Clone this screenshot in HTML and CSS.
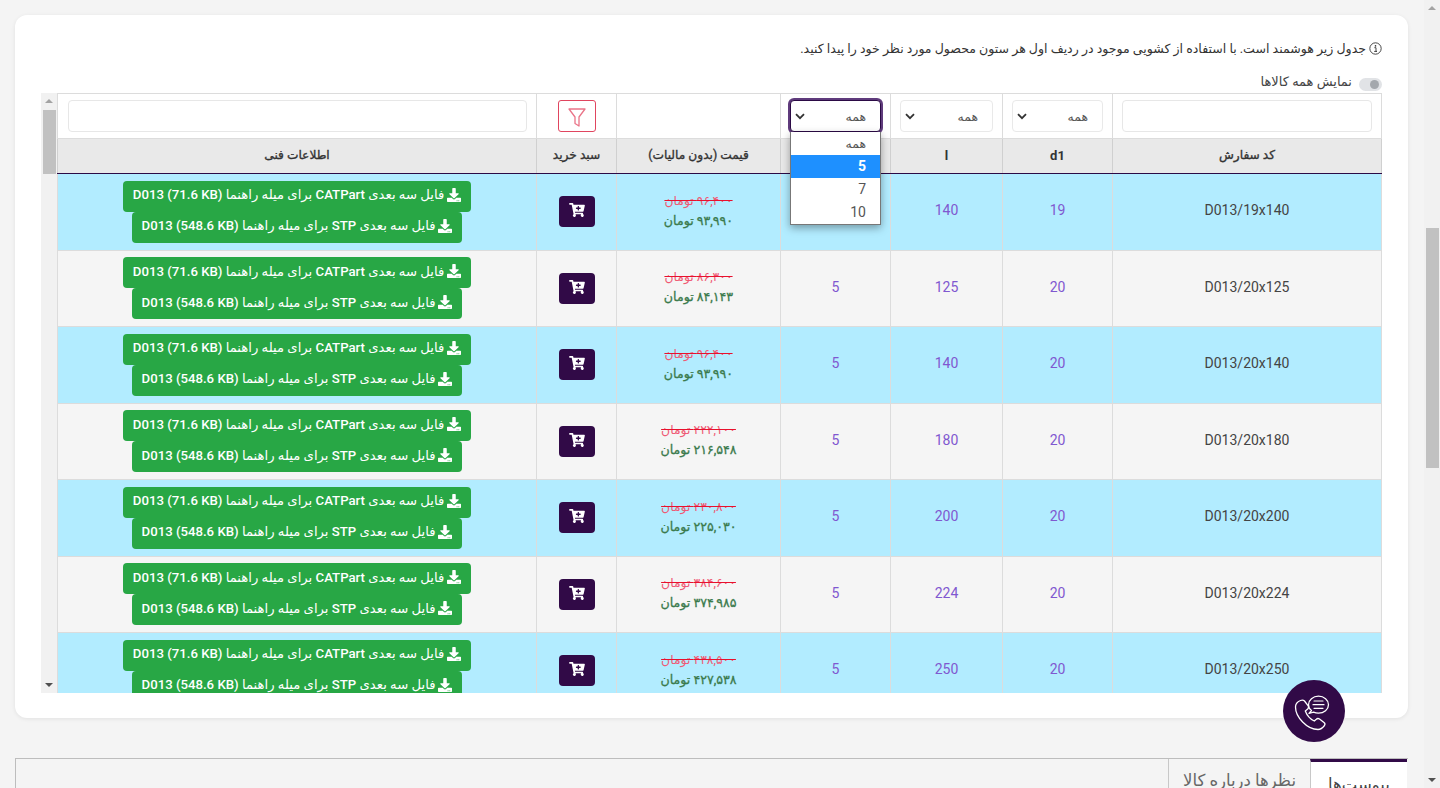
FILE: index.html
```html
<!DOCTYPE html>
<html lang="fa" dir="rtl">
<head>
  <meta charset="UTF-8" />
  <title>میله راهنما D013</title>
  <link rel="stylesheet" href="styles.css">
</head>
<body>
  <svg class="sprite" xmlns="http://www.w3.org/2000/svg">
    <symbol id="i-download" viewBox="0 0 512 512">
      <path fill="currentColor" d="M216 0h80c13.3 0 24 10.7 24 24v168h87.7c17.8 0 26.7 21.5 14.1 34.1L269.7 378.3c-7.5 7.5-19.8 7.5-27.3 0L90.1 226.1c-12.6-12.6-3.7-34.1 14.1-34.1H192V24c0-13.3 10.7-24 24-24zm296 376v112c0 13.3-10.7 24-24 24H24c-13.3 0-24-10.7-24-24V376c0-13.3 10.7-24 24-24h146.7l49 49c20.1 20.1 52.5 20.1 72.6 0l49-49H488c13.3 0 24 10.7 24 24zm-124 88c0-11-9-20-20-20s-20 9-20 20 9 20 20 20 20-9 20-20zm64 0c0-11-9-20-20-20s-20 9-20 20 9 20 20 20 20-9 20-20z"/>
    </symbol>
    <symbol id="i-cart" viewBox="0 0 576 512">
      <path fill="currentColor" d="M504.717 320H211.572l6.545 32h268.418c15.401 0 26.816 14.301 23.403 29.319l-5.517 24.276C523.112 414.668 536 433.828 536 456c0 31.202-25.519 56.444-56.824 55.994-29.823-.429-54.35-24.631-55.155-54.447-.44-16.287 6.085-31.049 16.803-41.548H231.176C241.553 426.165 248 440.326 248 456c0 31.813-26.528 57.431-58.67 55.938-28.54-1.325-51.751-24.385-53.251-52.917-1.158-22.034 10.436-41.455 28.051-51.586L93.883 64H24C10.745 64 0 53.255 0 40V24C0 10.745 10.745 0 24 0h102.529c11.401 0 21.228 8.021 23.513 19.19L159.208 64H551.99c15.401 0 26.816 14.301 23.403 29.319l-47.273 208C525.637 312.246 515.923 320 504.717 320zM408 168h-48v-40c0-8.837-7.163-16-16-16h-16c-8.837 0-16 7.163-16 16v40h-48c-8.837 0-16 7.163-16 16v16c0 8.837 7.163 16 16 16h48v40c0 8.837 7.163 16 16 16h16c8.837 0 16-7.163 16-16v-40h48c8.837 0 16-7.163 16-16v-16c0-8.837-7.163-16-16-16z"/>
    </symbol>
    <symbol id="i-chevron" viewBox="0 0 10 7">
      <path d="M1 1.2l4 4 4-4" fill="none" stroke="currentColor" stroke-width="1.8"/>
    </symbol>
  </svg>

  <div class="page-scrollbar">
    <span class="arrow-up"></span>
    <span class="page-thumb"></span>
    <span class="arrow-down"></span>
  </div>

  <main class="page">
    <section class="card">
      <p class="note">
        <svg class="note-icon" viewBox="0 0 16 16"><circle cx="8" cy="8" r="7" fill="none" stroke="currentColor" stroke-width="1.1"/><circle cx="8" cy="4.8" r="1" fill="currentColor"/><path d="M6.6 7h2v4.6h1M6.4 11.6h3.2" fill="none" stroke="currentColor" stroke-width="1.1"/></svg>
        جدول زیر هوشمند است. با استفاده از کشویی موجود در ردیف اول هر ستون محصول مورد نظر خود را پیدا کنید.
      </p>

      <div class="show-all">
        <span class="toggle"><span class="knob"></span></span>
        <span>نمایش همه کالاها</span>
      </div>

      <div class="table-wrap">
        <table class="products">
          <colgroup>
            <col class="c-code"><col class="c-d1"><col class="c-l"><col class="c-d"><col class="c-price"><col class="c-cart"><col>
          </colgroup>
          <thead>
            <tr class="filters">
              <td><div class="text-input"></div></td>
              <td><div class="select"><span>همه</span><svg class="chev"><use href="#i-chevron"/></svg></div></td>
              <td><div class="select"><span>همه</span><svg class="chev"><use href="#i-chevron"/></svg></div></td>
              <td class="open-cell">
                <div class="select focused"><span>همه</span><svg class="chev"><use href="#i-chevron"/></svg></div>
                <ul class="options">
                  <li class="fa-opt">همه</li>
                  <li class="selected">5</li>
                  <li>7</li>
                  <li>10</li>
                </ul>
              </td>
              <td></td>
              <td><button class="filter-btn"><svg viewBox="0 0 18 19"><path d="M1 1h16l-6 8v9l-4-2.500V9z" fill="none" stroke="currentColor" stroke-width="1.300" stroke-linejoin="round"/></svg></button></td>
              <td class="wide-filter"><div class="text-input"></div></td>
            </tr>
            <tr class="heads">
              <th>کد سفارش</th>
              <th class="latin">d1</th>
              <th class="latin">l</th>
              <th class="latin">d</th>
              <th>قیمت (بدون مالیات)</th>
              <th>سبد خرید</th>
              <th>اطلاعات فنی</th>
            </tr>
          </thead>
          <tbody>
            <tr>
              <td class="code">D013/19x140</td><td class="num">19</td><td class="num">140</td><td class="num">5</td>
              <td class="price"><s>۹۶,۴۰۰ تومان</s><b>۹۳,۹۹۰ تومان</b></td>
              <td><a class="cart"><svg><use href="#i-cart"/></svg></a></td>
              <td><div class="files"><a class="file"><svg><use href="#i-download"/></svg>فایل سه بعدی CATPart برای میله راهنما D013 (71.6 KB)</a><a class="file"><svg><use href="#i-download"/></svg>فایل سه بعدی STP برای میله راهنما D013 (548.6 KB)</a></div></td>
            </tr>
            <tr>
              <td class="code">D013/20x125</td><td class="num">20</td><td class="num">125</td><td class="num">5</td>
              <td class="price"><s>۸۶,۳۰۰ تومان</s><b>۸۴,۱۴۳ تومان</b></td>
              <td><a class="cart"><svg><use href="#i-cart"/></svg></a></td>
              <td><div class="files"><a class="file"><svg><use href="#i-download"/></svg>فایل سه بعدی CATPart برای میله راهنما D013 (71.6 KB)</a><a class="file"><svg><use href="#i-download"/></svg>فایل سه بعدی STP برای میله راهنما D013 (548.6 KB)</a></div></td>
            </tr>
            <tr>
              <td class="code">D013/20x140</td><td class="num">20</td><td class="num">140</td><td class="num">5</td>
              <td class="price"><s>۹۶,۴۰۰ تومان</s><b>۹۳,۹۹۰ تومان</b></td>
              <td><a class="cart"><svg><use href="#i-cart"/></svg></a></td>
              <td><div class="files"><a class="file"><svg><use href="#i-download"/></svg>فایل سه بعدی CATPart برای میله راهنما D013 (71.6 KB)</a><a class="file"><svg><use href="#i-download"/></svg>فایل سه بعدی STP برای میله راهنما D013 (548.6 KB)</a></div></td>
            </tr>
            <tr>
              <td class="code">D013/20x180</td><td class="num">20</td><td class="num">180</td><td class="num">5</td>
              <td class="price"><s>۲۲۲,۱۰۰ تومان</s><b>۲۱۶,۵۴۸ تومان</b></td>
              <td><a class="cart"><svg><use href="#i-cart"/></svg></a></td>
              <td><div class="files"><a class="file"><svg><use href="#i-download"/></svg>فایل سه بعدی CATPart برای میله راهنما D013 (71.6 KB)</a><a class="file"><svg><use href="#i-download"/></svg>فایل سه بعدی STP برای میله راهنما D013 (548.6 KB)</a></div></td>
            </tr>
            <tr>
              <td class="code">D013/20x200</td><td class="num">20</td><td class="num">200</td><td class="num">5</td>
              <td class="price"><s>۲۳۰,۸۰۰ تومان</s><b>۲۲۵,۰۳۰ تومان</b></td>
              <td><a class="cart"><svg><use href="#i-cart"/></svg></a></td>
              <td><div class="files"><a class="file"><svg><use href="#i-download"/></svg>فایل سه بعدی CATPart برای میله راهنما D013 (71.6 KB)</a><a class="file"><svg><use href="#i-download"/></svg>فایل سه بعدی STP برای میله راهنما D013 (548.6 KB)</a></div></td>
            </tr>
            <tr>
              <td class="code">D013/20x224</td><td class="num">20</td><td class="num">224</td><td class="num">5</td>
              <td class="price"><s>۳۸۴,۶۰۰ تومان</s><b>۳۷۴,۹۸۵ تومان</b></td>
              <td><a class="cart"><svg><use href="#i-cart"/></svg></a></td>
              <td><div class="files"><a class="file"><svg><use href="#i-download"/></svg>فایل سه بعدی CATPart برای میله راهنما D013 (71.6 KB)</a><a class="file"><svg><use href="#i-download"/></svg>فایل سه بعدی STP برای میله راهنما D013 (548.6 KB)</a></div></td>
            </tr>
            <tr>
              <td class="code">D013/20x250</td><td class="num">20</td><td class="num">250</td><td class="num">5</td>
              <td class="price"><s>۴۳۸,۵۰۰ تومان</s><b>۴۲۷,۵۳۸ تومان</b></td>
              <td><a class="cart"><svg><use href="#i-cart"/></svg></a></td>
              <td><div class="files"><a class="file"><svg><use href="#i-download"/></svg>فایل سه بعدی CATPart برای میله راهنما D013 (71.6 KB)</a><a class="file"><svg><use href="#i-download"/></svg>فایل سه بعدی STP برای میله راهنما D013 (548.6 KB)</a></div></td>
            </tr>
          </tbody>
        </table>
        <div class="table-scrollbar">
          <span class="arrow-up"></span>
          <span class="table-thumb"></span>
          <span class="arrow-down"></span>
        </div>
      </div>
    </section>

    <a class="call-btn">
      <svg viewBox="0 0 62 62" fill="none" stroke="#fff" stroke-width="1.300" stroke-linecap="round" stroke-linejoin="round">
        <path d="M17.500 20.500C15 21.500 12.500 24 12.500 27C12.500 37 24 49.500 35 49.500C38 49.500 40 47.500 41.500 45.500C42.300 44.300 42 43.300 41 42.500L36.500 39C35.300 38.200 34.300 38.300 33.300 39.300L31.300 41C27 39 24 35.500 22.300 31L24.700 29C25.700 28 25.800 27 25.200 25.800L21.500 21C20.500 20 19 19.900 17.500 20.500Z"/>
        <path d="M28.500 30.500C26.500 29 25.500 27 25.500 24.700C25.500 20 30 16.200 35.500 16.200S45.500 20 45.500 24.700S41 33.200 35.500 33.200C33.700 33.200 32 32.800 30.500 32.100L26 33.500Z"/>
        <path d="M31 21H40M30 24.700H41M31 28.300H40" stroke-width="1.200"/>
      </svg>
    </a>

    <section class="tabs">
      <a class="tab active">پیوست‌ها</a>
      <a class="tab">نظرها درباره کالا</a>
    </section>
  </main>
</body>
</html>
```

FILE: styles.css
```css
* {
  box-sizing: border-box;
}

html,
body {
  height: 100%;
}

body {
  margin: 0;
  display: flex;
  height: 100vh;
  overflow: hidden;
  background-color: #f4f4f4;
  color: #333;
  font-family: Roboto, "DejaVu Sans", sans-serif;
  font-size: 13px;
}

.sprite {
  display: none;
}

/* scrollbars */
.page-scrollbar,
.table-scrollbar {
  flex: 0 0 auto;
  width: 16px;
  display: flex;
  flex-direction: column;
  align-items: center;
  background-color: #f1f1f1;
}

.arrow-up,
.arrow-down {
  flex: 0 0 auto;
  width: 0;
  height: 0;
  border-left: 4px solid transparent;
  border-right: 4px solid transparent;
}

.arrow-up {
  margin-top: 6px;
  border-bottom: 4px solid #a3a3a3;
}

.arrow-down {
  margin-top: auto;
  margin-bottom: 6px;
  border-top: 4px solid #505050;
}

.page-thumb {
  width: 13px;
  height: 240px;
  margin-top: 218px;
  background-color: #c1c1c1;
}

.table-thumb {
  width: 13px;
  height: 64px;
  margin-top: 7px;
  background-color: #c1c1c1;
}

/* page */
.page {
  position: relative;
  flex: 1;
  min-width: 0;
  padding: 15px 16px 0 15px;
}

.card {
  height: 703px;
  padding: 23px 26px 0 26px;
  background-color: #fff;
  border-radius: 12px;
  box-shadow: 0 1px 4px rgba(0, 0, 0, 0.08);
}

.note {
  display: flex;
  align-items: center;
  gap: 3px;
  height: 20px;
  margin: 0;
  color: #333;
  font-size: 12.55px;
}

.note-icon {
  width: 13px;
  height: 13px;
  color: #333;
}

.show-all {
  display: flex;
  align-items: center;
  gap: 7px;
  height: 19px;
  margin-top: 16px;
  padding-bottom: 4px;
  color: #444;
  font-size: 13px;
}

.toggle {
  width: 23px;
  height: 13px;
  margin-top: 6px;
  padding: 2px 3px;
  display: flex;
  border-radius: 7px;
  background-color: #e1e3e6;
}

.knob {
  width: 9px;
  height: 9px;
  border-radius: 50%;
  background-color: #a4a8ad;
}

/* table */
.table-wrap {
  display: flex;
  height: 600px;
  overflow: hidden;
}

.products {
  flex: 1;
  width: 1324px;
  height: 0;
  table-layout: fixed;
  border-collapse: collapse;
  font-size: 14px;
}

.c-code { width: 269px; }
.c-d1 { width: 110px; }
.c-l { width: 112px; }
.c-d { width: 110px; }
.c-price { width: 164px; }
.c-cart { width: 80px; }

.products td,
.products th {
  border: 1px solid #dcdcdc;
  text-align: center;
  vertical-align: middle;
}

.filters td {
  height: 45px;
  padding: 6px 9px;
  background-color: #fff;
}

.products .wide-filter {
  padding-left: 10px;
}

.text-input {
  height: 32px;
  background-color: #fff;
  border: 1px solid #e7e7e7;
  border-radius: 4px;
}

.select {
  display: flex;
  align-items: center;
  justify-content: space-between;
  height: 32px;
  padding: 0 14px 0 4px;
  background-color: #fff;
  border: 1px solid #e9e9e9;
  border-radius: 4px;
  color: #555;
  font-size: 12.5px;
}

.select.focused {
  border: 1px solid #2b0a45;
  box-shadow: 0 0 0 2px #5f3b7c;
}

.chev {
  width: 10px;
  height: 7px;
  color: #333;
}

.open-cell {
  position: relative;
}

.options {
  position: absolute;
  z-index: 5;
  top: 38px;
  left: 9px;
  width: 91px;
  margin: 0;
  padding: 0;
  list-style: none;
  background-color: #fff;
  border: 1px solid #777;
  border-top: 0;
  box-shadow: 0 3px 8px rgba(0, 0, 0, 0.35);
  color: #555;
  font-size: 14px;
  text-align: right;
}

.options li {
  height: 23px;
  line-height: 23px;
  padding-right: 14px;
}

.options .fa-opt {
  font-size: 12.5px;
}

.options .selected {
  background-color: #1e90ff;
  color: #fff;
  font-weight: 700;
}

.filter-btn {
  display: block;
  width: 38px;
  height: 32px;
  margin: 0 auto;
  padding: 3px 0 0;
  background: none;
  border: 1px solid #e0455f;
  border-radius: 3px;
  color: #ea7488;
}

.filter-btn svg {
  display: block;
  width: 18px;
  height: 19px;
  margin: 0 auto;
}

.products .heads th {
  height: 35px;
  padding-bottom: 3px;
  background-color: #e9e9e9;
  border-color: #d0d0d0;
  border-bottom: 1px solid #2b0a45;
  color: #333;
  font-size: 12.2px;
  font-weight: 400;
  -webkit-text-stroke: 0.35px #333;
}

.products .heads .latin {
  font-size: 13px;
  font-weight: 700;
  -webkit-text-stroke: 0;
}

tbody td {
  height: 76.5px;
  padding: 0;
  border-color: #d8d8d8;
  border-bottom-color: #c8c8c8;
  color: #444;
}

tbody tr:nth-child(odd) td {
  background-color: #b2ecff;
}

tbody tr:nth-child(even) td {
  background-color: #f5f5f5;
}

.products .code,
.products .num,
.products .price {
  padding-bottom: 3px;
}

.num {
  color: #8058d0 !important;
}

.price s,
.price b {
  display: block;
}

.price s {
  color: #ef5a74;
  font-size: 12.4px;
  font-weight: 400;
  text-decoration-color: #e8112d;
}

.price b {
  margin-top: 5px;
  color: #3a7a4c;
  font-size: 12.6px;
  font-weight: 400;
  -webkit-text-stroke: 0.3px #3a7a4c;
}

.cart {
  display: inline-flex;
  align-items: center;
  justify-content: center;
  width: 36px;
  height: 31px;
  padding-bottom: 3px;
  vertical-align: middle;
  background-color: #310a47;
  border-radius: 4px;
  color: #fff;
}

.cart svg {
  width: 16px;
  height: 14px;
}

.files {
  display: flex;
  flex-direction: column;
  align-items: center;
}

.file {
  display: inline-flex;
  align-items: center;
  justify-content: center;
  gap: 3px;
  height: 31px;
  padding: 0 10px 3px;
  background-color: #28a745;
  border-radius: 4px;
  color: #fff;
  font-size: 13.2px;
  font-weight: 500;
  white-space: nowrap;
}

.file svg {
  flex: 0 0 auto;
  width: 14px;
  height: 14px;
}

/* floating call button */
.call-btn {
  position: absolute;
  top: 680px;
  left: 1283px;
  width: 62px;
  height: 62px;
  border-radius: 50%;
  background-color: #310a47;
}

.call-btn svg {
  display: block;
  width: 62px;
  height: 62px;
}

/* tabs under the card */
.tabs {
  display: flex;
  height: 200px;
  margin-top: 40px;
  border-top: 1px solid #bdbdbd;
  border-left: 1px solid #bdbdbd;
}

.tab {
  height: 40px;
  padding: 12px 14px 0;
  border-left: 1px solid #c8c8c8;
  color: #666;
  font-size: 16.5px;
}

.tab.active {
  width: 97px;
  margin-right: 1px;
  background-color: #fff;
  border-top: 3px solid #310a47;
  color: #444;
  text-align: center;
  padding-top: 13px;
  padding-left: 0;
  padding-right: 0;
}
```
